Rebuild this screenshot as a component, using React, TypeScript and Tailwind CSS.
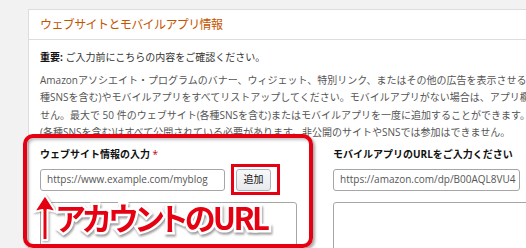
const PARAGRAPH = [
  "Amazonアソシエイト・プログラムのバナー、ウィジェット、特別リンク、またはその他の広告を表示させる予定のウェブサイト(各",
  "種SNSを含む)やモバイルアプリをすべてリストアップしてください。モバイルアプリがない場合は、アプリ欄の入力は必要ありま",
  "せん。最大で 50 件のウェブサイト(各種SNSを含む)またはモバイルアプリを一度に追加することができます。なお、ウェブサイト",
  "(各種SNSを含む)はすべて公開されている必要があります。非公開のサイトやSNSでは参加はできません。",
] as const;

const FONT = "font-['Open_Sans','Noto_Sans_CJK_JP',sans-serif]";

function UpArrow() {
  return (
    <svg width="26" height="50" viewBox="0 0 26 50" className="absolute left-[32px] top-[193px] drop-shadow-[1px_1px_1px_rgba(0,0,0,0.35)]">
      <path
        d="M13 2 L24 19 L15.5 17 L15.5 47 L10.5 47 L10.5 17 L2 19 Z"
        fill="#e50012"
        stroke="#ffffff"
        strokeWidth="2"
        strokeLinejoin="round"
      />
    </svg>
  );
}

export default function App() {
  return (
    <div className={`relative w-[526px] h-[248px] overflow-hidden bg-[#f2f2f2] ${FONT}`}>
      <div className="ml-[28px] mt-[9px] w-[620px] h-[300px] bg-white border border-[#dddddd]">
        <div className="h-[30px] border-b border-[#dddddd] px-[11px] flex items-center text-[#c45500] text-[12px] tracking-[-0.6px]">
          ウェブサイトとモバイルアプリ情報
        </div>

        <div className="px-[11px] pt-[9px]">
          <p className="text-[10px] leading-[17.5px] text-[#333]">
            <span className="font-bold text-[#111]">重要:</span> ご入力前にこちらの内容をご確認ください。
          </p>

          <div className="mt-[5px] text-[10px] leading-[17.6px] text-[#555] whitespace-nowrap">
            {PARAGRAPH.map((line) => (
              <p key={line}>{line}</p>
            ))}
          </div>

          <div className="mt-[5px] grid grid-cols-[257px_257px] gap-x-[36px]">
            <div>
              <div className="h-[14px] leading-[14px] text-[10px] font-bold text-[#111]">
                ウェブサイト情報の入力 <span className="text-[#c40000] font-normal">*</span>
              </div>
              <div className="mt-[8px] flex gap-[11px]">
                <div className="w-[185px] h-[22px] border border-[#a6a6a6] rounded-[3px] px-[6px] flex items-center text-[10px] text-[#555]">
                  https://www.example.com/myblog
                </div>
                <button className="w-[35px] h-[22px] border border-[#adb1b8] rounded-[3px] bg-gradient-to-b from-[#f7f8fa] to-[#e7e9ec] text-[10px] text-[#111]">
                  追加
                </button>
              </div>
              <div className="mt-[11px] h-[70px] border border-[#a6a6a6] rounded-[3px]" />
            </div>

            <div>
              <div className="h-[14px] leading-[14px] text-[10px] font-bold text-[#111]">
                モバイルアプリのURLをご入力ください
              </div>
              <div className="mt-[8px] w-[187px] h-[22px] border border-[#a6a6a6] rounded-[3px] px-[6px] flex items-center text-[10px] text-[#555]">
                https://amazon.com/dp/B00AQL8VU4
              </div>
              <div className="mt-[11px] h-[70px] border border-[#a6a6a6] rounded-[3px]" />
            </div>
          </div>
        </div>
      </div>

      {/* annotations */}
      <div className="absolute left-[23px] top-[134px] w-[290px] h-[114px] border-[4px] border-[#e50012] rounded-[10px] shadow-[2px_2px_3px_rgba(0,0,0,0.35),inset_2px_2px_3px_rgba(0,0,0,0.25)]" />
      <div className="absolute left-[231px] top-[164px] w-[49px] h-[31px] border-[3px] border-[#e50012]" />
      <UpArrow />
      <div className="absolute left-[56px] top-[197px] text-[31px] leading-[40px] font-bold tracking-[-2.5px] text-[#e50012] [font-feature-settings:'palt'] [-webkit-text-stroke:5px_white] [paint-order:stroke_fill] drop-shadow-[1px_2px_1px_rgba(0,0,0,0.4)] whitespace-nowrap font-['Noto_Sans_CJK_JP',sans-serif]">
        アカウントのURL
      </div>
    </div>
  );
}
